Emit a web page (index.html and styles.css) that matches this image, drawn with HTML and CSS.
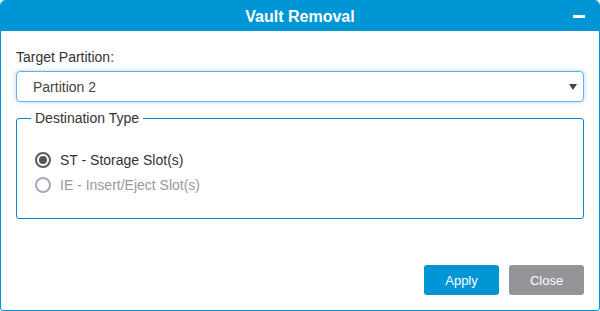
FILE: index.html
```html
<!DOCTYPE html>
<html>
<head>
<meta charset="utf-8">
<link rel="stylesheet" href="styles.css">
</head>
<body>
<div class="dialog">
  <div class="header">
    <span class="title">Vault Removal</span>
    <span class="minimize"></span>
  </div>
  <div class="body">
    <label class="field-label">Target Partition:</label>
    <div class="select">
      <span class="select-text">Partition 2</span>
      <span class="caret"></span>
    </div>
    <fieldset class="group">
      <legend>Destination Type</legend>
      <div class="radio checked"><span class="dot"></span><span>ST - Storage Slot(s)</span></div>
      <div class="radio disabled"><span class="dot"></span><span>IE - Insert/Eject Slot(s)</span></div>
    </fieldset>
    <div class="actions">
      <button class="btn primary">Apply</button>
      <button class="btn secondary">Close</button>
    </div>
  </div>
</div>
</body>
</html>
```
FILE: styles.css
```css
* { box-sizing: border-box; }
html, body { margin: 0; padding: 0; background: #fff; }
body { font-family: "Liberation Sans", Arial, sans-serif; width: 600px; height: 311px; overflow: hidden; }
.dialog {
  width: 600px; height: 311px;
  border: 1px solid #0096d6;
  border-radius: 5px 5px 3px 3px;
  display: flex; flex-direction: column;
  overflow: hidden;
}
.header {
  height: 30px; background: #0096d6; color: #fff;
  display: flex; align-items: center; justify-content: center;
  position: relative; flex: none;
}
.title { font-weight: bold; font-size: 16px; margin-top: 1px; }
.minimize {
  position: absolute; right: 14px; top: 14px;
  width: 12px; height: 3px; background: #fff;
}
.body { flex: 1; padding: 16px 15px 0 15px; display: flex; flex-direction: column; }
.field-label { font-size: 14px; color: #333; line-height: 16px; display: block; margin-top: 2px; }
.select {
  margin-top: 6px; height: 31px;
  border: 1px solid #66afe9; border-radius: 4px;
  box-shadow: 0 0 4px rgba(102,175,233,0.55);
  display: flex; align-items: center; justify-content: space-between;
  padding: 0 6px 0 16px;
}
.select-text { font-size: 14px; color: #444; }
.caret {
  width: 0; height: 0;
  border-left: 4px solid transparent; border-right: 4px solid transparent;
  border-top: 6px solid #444; margin-top: 1px;
}
.group {
  margin: 8px 0 0 0; padding: 21px 0 0 18px; height: 109px;
  border: 1px solid #0a87c6; border-radius: 3px;
}
.group legend { font-size: 14px; color: #333; padding: 0 4px; margin-left: -4px; line-height: 16px; }
.radio { display: flex; align-items: center; font-size: 14px; color: #333; height: 25px; }
.radio .dot {
  width: 16px; height: 16px; border-radius: 50%;
  border: 2px solid #5a5a5a; margin-right: 9px; position: relative; flex: none;
}
.radio.checked .dot::after {
  content: ""; position: absolute; left: 2px; top: 2px; width: 8px; height: 8px;
  border-radius: 50%; background: #555;
}
.radio.disabled { color: #999; }
.radio.disabled .dot { border-color: #a3acb5; }
.actions { margin-top: auto; display: flex; justify-content: flex-end; gap: 10px; padding: 0 0 15px 0; }
.btn {
  width: 75px; height: 30px; border: none; border-radius: 3px;
  font-family: "Liberation Sans", Arial, sans-serif; font-size: 13px; color: #fff;
}
.btn.primary { background: #0096d6; }
.btn.secondary { background: #939598; }
```
